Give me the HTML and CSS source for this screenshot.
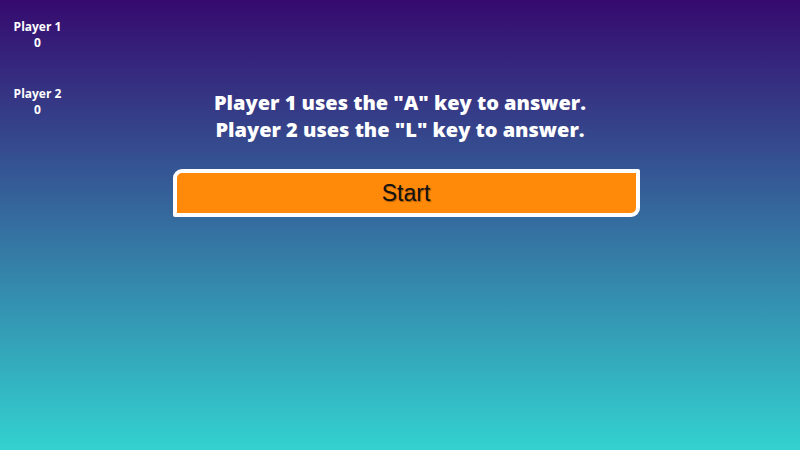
FILE: index.html
```html
<!DOCTYPE html>
<html>
<head>
<meta charset="utf-8">
<link rel="stylesheet" href="styles.css">
</head>
<body>
<div class="screen">
  <aside class="scores">
    <div class="score">
      <div class="name">Player 1</div>
      <div class="points">0</div>
    </div>
    <div class="score">
      <div class="name">Player 2</div>
      <div class="points">0</div>
    </div>
  </aside>
  <main class="main">
    <p class="instructions">Player 1 uses the "A" key to answer.<br>Player 2 uses the "L" key to answer.</p>
    <button class="start">Start</button>
  </main>
  <div class="spacer"></div>
</div>
</body>
</html>
```
FILE: styles.css
```css
html, body {
  margin: 0;
  padding: 0;
  height: 100%;
}
body {
  background: linear-gradient(to bottom, #360a6f 0%, #33d2d0 100%);
  font-family: "Open Sans", sans-serif;
  color: #fff;
}
.screen {
  display: grid;
  grid-template-columns: 75px 1fr 75px;
  height: 450px;
}
.scores {
  display: flex;
  flex-direction: column;
  gap: 35px;
  padding-top: 19px;
}
.score {
  text-align: center;
  font-weight: 700;
  font-size: 12px;
  line-height: 16px;
}
.main {
  display: flex;
  flex-direction: column;
  align-items: center;
  padding-top: 89px;
}
.instructions {
  margin: 0;
  text-align: center;
  font-weight: 800;
  font-size: 20px;
  line-height: 27px;
}
.start {
  margin-top: 26px;
  margin-left: 12px;
  width: 467px;
  height: 48px;
  box-sizing: border-box;
  background: #ff8a0a;
  border: 4px solid #fff;
  border-radius: 9px 2px 9px 2px;
  font-family: "Liberation Sans", Arial, sans-serif;
  font-size: 23px;
  color: #111;
  text-shadow: 1px 1px 1px rgba(0,0,0,0.35);
  padding: 0;
}
```
